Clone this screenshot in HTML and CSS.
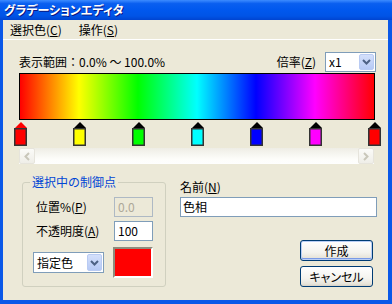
FILE: index.html
```html
<!DOCTYPE html>
<html lang="ja">
<head>
  <meta charset="UTF-8" />
  <title>グラデーションエディタ</title>
  <link rel="stylesheet" href="styles.css">
</head>
<body>
<div class="window">
  <div class="titlebar">グラデーションエディタ</div>
  <div class="frame">
    <div class="menubar">
      <span class="menu-item">選択色(<u>C</u>)</span>
      <span class="menu-item">操作(<u>S</u>)</span>
    </div>

    <div class="content">
      <div class="range-row">
        <span class="range-text">表示範囲：0.0% ～ 100.0%</span>
        <span class="zoom-label">倍率(<u>Z</u>)</span>
        <div class="combo zoom-combo">
          <span class="combo-text">x1</span>
          <span class="combo-btn">
            <svg width="9" height="6" viewBox="0 0 9 6"><polyline points="1,1 4.5,4.5 8,1" fill="none" stroke="#4d6185" stroke-width="2"/></svg>
          </span>
        </div>
      </div>

      <div class="gradient"></div>

      <div class="markers">
        <div class="marker selected"><span class="tip"></span><span class="body red"></span></div>
        <div class="marker"><span class="tip"></span><span class="body yellow"></span></div>
        <div class="marker"><span class="tip"></span><span class="body green"></span></div>
        <div class="marker"><span class="tip"></span><span class="body cyan"></span></div>
        <div class="marker"><span class="tip"></span><span class="body blue"></span></div>
        <div class="marker"><span class="tip"></span><span class="body magenta"></span></div>
        <div class="marker"><span class="tip"></span><span class="body red"></span></div>
      </div>

      <div class="hscroll">
        <span class="sb-btn">
          <svg width="8" height="9" viewBox="0 0 8 9"><polyline points="6,1 2.5,4.5 6,8" fill="none" stroke="#c9c7ba" stroke-width="2"/></svg>
        </span>
        <span class="sb-track"></span>
        <span class="sb-btn">
          <svg width="8" height="9" viewBox="0 0 8 9"><polyline points="2,1 5.5,4.5 2,8" fill="none" stroke="#c9c7ba" stroke-width="2"/></svg>
        </span>
      </div>

      <div class="bottom">
        <fieldset class="group">
          <legend>選択中の制御点</legend>
          <div class="field-grid">
            <span class="label">位置%(<u>P</u>)</span>
            <div class="textbox disabled">0.0</div>
            <span class="label">不透明度(<u>A</u>)</span>
            <div class="textbox">100</div>
          </div>
          <div class="color-row">
            <div class="combo color-combo">
              <span class="combo-text">指定色</span>
              <span class="combo-btn">
                <svg width="9" height="6" viewBox="0 0 9 6"><polyline points="1,1 4.5,4.5 8,1" fill="none" stroke="#4d6185" stroke-width="2"/></svg>
              </span>
            </div>
            <div class="swatch"></div>
          </div>
        </fieldset>

        <div class="right-col">
          <span class="label">名前(<u>N</u>)</span>
          <div class="textbox name-box">色相</div>
          <button class="btn default">作成</button>
          <button class="btn">キャンセル</button>
        </div>
      </div>
    </div>
  </div>
</div>
</body>
</html>
```

FILE: styles.css
```css
body {
  margin: 0;
  font-family: "Noto Sans CJK JP", sans-serif;
  font-size: 12px;
  color: #000;
}
u {
  text-decoration: underline;
  text-underline-offset: 1px;
}
.window {
  width: 392px;
  height: 304px;
  display: flex;
  flex-direction: column;
}
.titlebar {
  height: 20px;
  line-height: 20px;
  padding-left: 4px;
  color: #fff;
  font-weight: bold;
  font-size: 12px;
  font-feature-settings: "palt";
  text-shadow: 1px 1px #0a1883;
  background: linear-gradient(#3d8cff 0%, #0a5ff0 18%, #0058ee 50%, #0054e6 80%, #0044d0 100%);
}
.frame {
  flex: 1;
  display: flex;
  flex-direction: column;
  background: #ece9d8;
  border: solid #0a58e8;
  border-width: 0 4px 4px 3px;
}
.menubar {
  height: 19px;
  line-height: 19px;
  border-bottom: 1px solid #fff;
  padding-left: 7px;
  display: flex;
  gap: 17px;
}
.content {
  padding: 12px 13px 0 16px;
  display: flex;
  flex-direction: column;
}
.range-row {
  height: 20px;
  display: flex;
  align-items: center;
}
.range-text {
  flex: 1;
  line-height: 16px;
}
.zoom-label {
  margin-right: 9px;
  line-height: 16px;
}
.combo {
  box-sizing: border-box;
  border: 1px solid #7f9db9;
  background: #fff;
  display: flex;
  align-items: center;
  justify-content: space-between;
  padding: 1px;
}
.zoom-combo {
  width: 51px;
  height: 20px;
  margin-right: -1px;
}
.combo-text {
  padding-left: 2px;
  line-height: 16px;
}
.combo-btn {
  width: 15px;
  height: 16px;
  box-sizing: border-box;
  border: 1px solid #b9cbf3;
  border-radius: 2px;
  background: linear-gradient(#d4e0fb, #b6c9f5);
  display: flex;
  align-items: center;
  justify-content: center;
}
.gradient {
  margin-top: 1px;
  height: 47px;
  box-sizing: border-box;
  border: 1px solid #000;
  background: linear-gradient(to right, #f00 0%, #ff0 16.67%, #0f0 33.33%, #0ff 50%, #00f 66.67%, #f0f 83.33%, #f00 100%);
}
.markers {
  margin: 2px -6px 0 -5px;
  height: 24px;
  display: flex;
  justify-content: space-between;
}
.marker {
  width: 13px;
  display: flex;
  flex-direction: column;
  align-items: center;
}
.tip {
  width: 0;
  height: 0;
  border-left: 6px solid transparent;
  border-right: 6px solid transparent;
  border-bottom: 6px solid #000;
}
.marker.selected .tip {
  border-bottom-color: #f00;
}
.body {
  width: 13px;
  height: 18px;
  box-sizing: border-box;
  border: 1px solid #333;
  box-shadow: inset 0 0 0 0.5px #333;
}
.red { background: #f00; }
.yellow { background: #ff0; }
.green { background: #0f0; }
.cyan { background: #0ff; }
.blue { background: #00f; }
.magenta { background: #f0f; }
.hscroll {
  margin: 2px 1px 0 0;
  height: 16px;
  display: flex;
  background: linear-gradient(#eeede5, #fdfdfa 70%, #fefefe);
}
.sb-track {
  flex: 1;
}
.sb-btn {
  width: 16px;
  height: 16px;
  box-sizing: border-box;
  border: 1px solid #e6e4dc;
  border-radius: 2px;
  background: linear-gradient(#fbfbf8, #efeee8);
  display: flex;
  align-items: center;
  justify-content: center;
}
.bottom {
  margin-top: 10px;
  display: flex;
  align-items: flex-start;
}
.group {
  margin: 0 0 0 3px;
  width: 144px;
  box-sizing: border-box;
  border: 1px solid #d0d0bf;
  border-radius: 3px;
  padding: 7px 0 8px 13px;
  min-width: 0;
}
.group legend {
  color: #0046d5;
  line-height: 16px;
  padding: 0 2px;
  margin-left: -6px;
}
.field-grid {
  display: grid;
  grid-template-columns: 78px 39px;
  grid-auto-rows: 20px;
  row-gap: 4px;
  align-items: center;
}
.label {
  line-height: 16px;
}
.textbox {
  box-sizing: border-box;
  height: 20px;
  border: 1px solid #7f9db9;
  background: #fff;
  line-height: 18px;
  padding-left: 3px;
}
.textbox.disabled {
  background: #ece9d8;
  color: #aca899;
  border-color: #aeb9c4;
}
.color-row {
  margin-top: 6px;
  margin-left: -3px;
  display: flex;
  align-items: center;
  gap: 9px;
}
.color-combo {
  width: 71px;
  height: 21px;
}
.color-combo .combo-btn {
  height: 17px;
}
.swatch {
  width: 40px;
  height: 31px;
  box-sizing: border-box;
  border: 2px solid;
  border-color: #8d8b7c #fff #fff #8d8b7c;
  background: #f00;
}
.right-col {
  flex: 1;
  margin: 5px -2px 0 14px;
  display: flex;
  flex-direction: column;
}
.name-box {
  margin-top: 2px;
  padding-left: 2px;
}
.btn {
  align-self: flex-end;
  margin-right: 4px;
  width: 73px;
  height: 21px;
  margin-top: 5px;
  padding: 0;
  font: inherit;
  line-height: 17px;
  font-feature-settings: "palt";
  border: 1px solid #003c74;
  border-radius: 3px;
  background: linear-gradient(#fff 0%, #f4f3ee 60%, #e6e3d9 90%, #d6d0c5 100%);
  color: #000;
}
.btn.default {
  margin-top: 23px;
  box-shadow: inset 0 0 0 1px #b9cef5, inset 0 -1px 0 1px #7a9ae6;
}
```
